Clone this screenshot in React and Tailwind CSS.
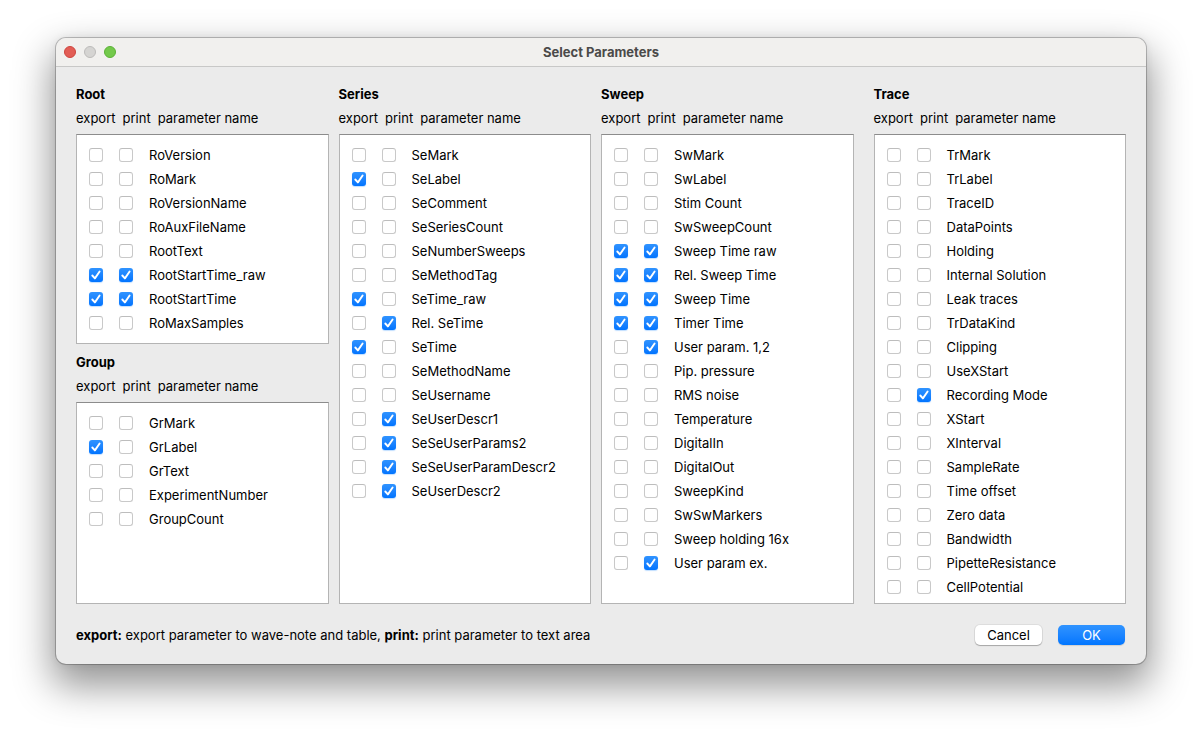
import React, { useId } from "react";

const NONE = [];

const GROUPS = {
  root: {
    title: "Root",
    names: ["RoVersion", "RoMark", "RoVersionName", "RoAuxFileName", "RootText", "RootStartTime_raw", "RootStartTime", "RoMaxSamples"],
    exported: ["RootStartTime_raw", "RootStartTime"],
    printed: ["RootStartTime_raw", "RootStartTime"],
  },
  group: {
    title: "Group",
    names: ["GrMark", "GrLabel", "GrText", "ExperimentNumber", "GroupCount"],
    exported: ["GrLabel"],
    printed: NONE,
  },
  series: {
    title: "Series",
    names: ["SeMark", "SeLabel", "SeComment", "SeSeriesCount", "SeNumberSweeps", "SeMethodTag", "SeTime_raw", "Rel. SeTime", "SeTime", "SeMethodName", "SeUsername", "SeUserDescr1", "SeSeUserParams2", "SeSeUserParamDescr2", "SeUserDescr2"],
    exported: ["SeLabel", "SeTime_raw", "SeTime"],
    printed: ["Rel. SeTime", "SeUserDescr1", "SeSeUserParams2", "SeSeUserParamDescr2", "SeUserDescr2"],
  },
  sweep: {
    title: "Sweep",
    names: ["SwMark", "SwLabel", "Stim Count", "SwSweepCount", "Sweep Time raw", "Rel. Sweep Time", "Sweep Time", "Timer Time", "User param. 1,2", "Pip. pressure", "RMS noise", "Temperature", "DigitalIn", "DigitalOut", "SweepKind", "SwSwMarkers", "Sweep holding 16x", "User param ex."],
    exported: ["Sweep Time raw", "Rel. Sweep Time", "Sweep Time", "Timer Time"],
    printed: ["Sweep Time raw", "Rel. Sweep Time", "Sweep Time", "Timer Time", "User param. 1,2", "User param ex."],
  },
  trace: {
    title: "Trace",
    names: ["TrMark", "TrLabel", "TraceID", "DataPoints", "Holding", "Internal Solution", "Leak traces", "TrDataKind", "Clipping", "UseXStart", "Recording Mode", "XStart", "XInterval", "SampleRate", "Time offset", "Zero data", "Bandwidth", "PipetteResistance", "CellPotential"],
    exported: NONE,
    printed: ["Recording Mode"],
  },
};

function Check({ id, label, defaultChecked }) {
  return (
    <span className="grid size-3.5 shrink-0">
      <input
        id={id}
        type="checkbox"
        aria-label={label}
        defaultChecked={defaultChecked}
        className="peer col-start-1 row-start-1 size-3.5 appearance-none rounded-[3px] border border-[#c9c9c9] border-t-[#bdbdbd] bg-white checked:border-0 checked:bg-linear-to-b checked:from-[#2f93ff] checked:to-[#0074ff] checked:shadow-[0_1px_1px_rgba(0,122,255,0.25)]"
      />
      <svg viewBox="0 0 14 14" className="pointer-events-none invisible col-start-1 row-start-1 size-3.5 peer-checked:visible" aria-hidden="true">
        <path d="M3.3 7.5 L5.9 10.4 L10.6 3.5" fill="none" stroke="#fff" strokeWidth="1.9" strokeLinecap="round" strokeLinejoin="round" />
      </svg>
    </span>
  );
}

function ParameterGroup({ group, className = "", listClassName = "pb-1" }) {
  const base = useId();
  return (
    <section className={`flex flex-col ${className}`}>
      <h2 className="font-bold">{group.title}</h2>
      <div className="mb-1 flex gap-[7px] whitespace-nowrap">
        <span>export</span>
        <span>print</span>
        <span>parameter name</span>
      </div>
      <ul className={`flex-1 border border-[#b4b4b4] border-t-[#8c8c8c] bg-white px-3 pt-2 ${listClassName}`}>
        {group.names.map((name, i) => (
          <li key={name} className="flex h-6 items-center gap-4">
            <Check id={`${base}-e${i}`} label={`export ${name}`} defaultChecked={group.exported.includes(name)} />
            <Check id={`${base}-p${i}`} label={`print ${name}`} defaultChecked={group.printed.includes(name)} />
            <label htmlFor={`${base}-e${i}`} className="whitespace-nowrap">{name}</label>
          </li>
        ))}
      </ul>
    </section>
  );
}

export default function App() {
  return (
    <div className="min-h-screen bg-white px-14 pt-[38px] pb-[74px] font-['Inter',sans-serif] text-[13px] leading-6 text-black">
      <main className="overflow-hidden rounded-[10px] bg-[#ebebeb] shadow-[0_0_0_1px_rgba(0,0,0,0.22),0_18px_38px_4px_rgba(0,0,0,0.42),0_0_8px_rgba(0,0,0,0.08)]">
        <header className="grid h-[29px] grid-cols-[1fr_auto_1fr] items-center border-b border-[#c8c8c7] bg-[#f1f0ee] px-2">
          <div className="flex gap-2">
            <button type="button" aria-label="Close" className="size-3 rounded-full border border-[#ce453e] bg-[#e25d55]" />
            <button type="button" aria-label="Minimize" className="size-3 rounded-full border border-[#bcbbba] bg-[#d5d4d2]" />
            <button type="button" aria-label="Zoom" className="size-3 rounded-full border border-[#5bb136] bg-[#73c94b]" />
          </div>
          <h1 className="font-bold text-[#4b4a49]">Select Parameters</h1>
        </header>
        <form className="px-5 pt-[15px] pb-[19px]" onSubmit={(e) => e.preventDefault()}>
          <div className="flex gap-2.5">
            <div className="flex flex-1 flex-col gap-1.5">
              <ParameterGroup group={GROUPS.root} listClassName="pb-2" />
              <ParameterGroup group={GROUPS.group} className="flex-1" />
            </div>
            <ParameterGroup group={GROUPS.series} className="flex-1" />
            <ParameterGroup group={GROUPS.sweep} className="flex-1" />
            <ParameterGroup group={GROUPS.trace} className="ml-2.5 flex-1" />
          </div>
          <footer className="mt-[21px] flex h-5 items-center justify-between">
            <p>
              <b>export:</b> export parameter to wave-note and table, <b>print:</b> print parameter to text area
            </p>
            <div className="flex gap-4 pr-px leading-5">
              <button type="button" className="h-5 w-[67px] rounded-[5px] bg-white shadow-[0_0_0_1px_rgba(0,0,0,0.06),0_1px_1px_rgba(0,0,0,0.25)]">Cancel</button>
              <button type="submit" className="h-5 w-[67px] rounded-[5px] bg-linear-to-b from-[#2f93ff] to-[#0076ff] text-white shadow-[0_1px_1px_rgba(0,0,0,0.12)]">OK</button>
            </div>
          </footer>
        </form>
      </main>
    </div>
  );
}
